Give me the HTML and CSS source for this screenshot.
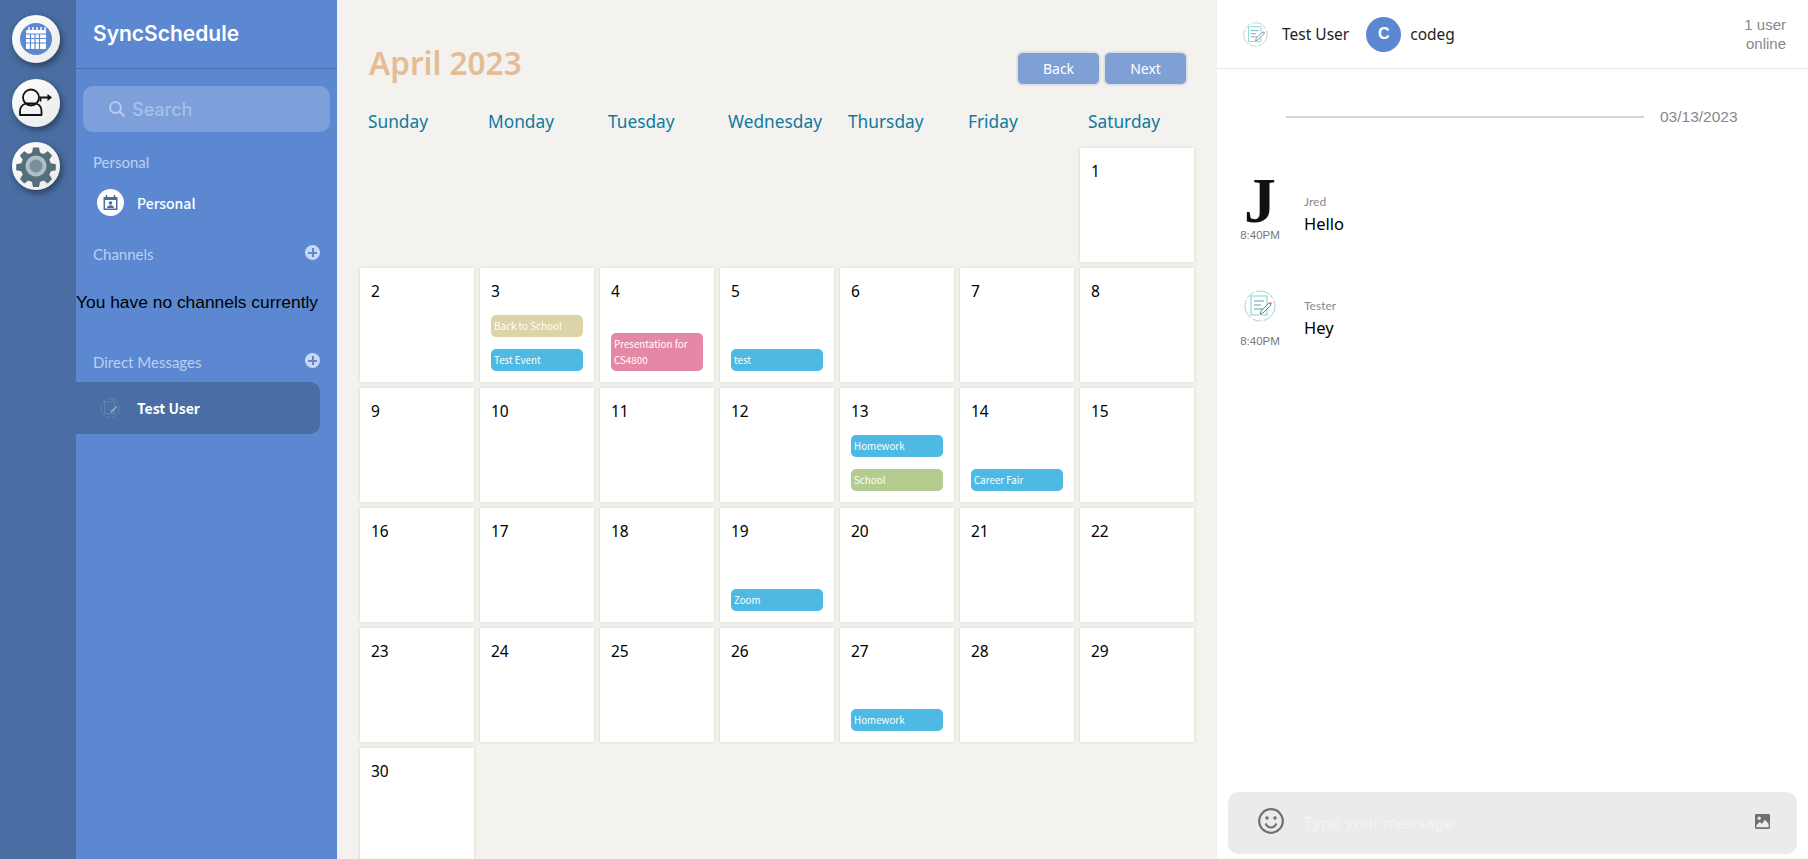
FILE: index.html
```html
<!DOCTYPE html>
<html lang="en">
	<head>
		<meta name="viewport" content="width=device-width, initial-scale=1" />
		<title>SyncSchedule</title>
		<link rel="stylesheet" href="styles.css">
	</head>
	<body>
		<svg class="defs" width="0" height="0">
			<symbol id="noteIcon" viewBox="0 0 32 32">
				<circle cx="16" cy="16" r="15" fill="none" stroke="#9fc9cf" stroke-width="0.9" stroke-dasharray="20 2 9 2" />
				<path d="M7 6h16v19H7z" fill="none" stroke="#7fd3dc" stroke-width="1.1" />
				<path d="M10 11h10M10 15h7M10 19h9" stroke="#5f9aa6" stroke-width="1" />
				<path d="M17 21l8-8 2 2-8 8-3 1z" fill="#fff" stroke="#5f8a96" stroke-width="1" />
				<path d="M25 13l1.400-1.400 2 2L27 15z" fill="#ee8f7d" />
			</symbol>
		</svg>
		<nav class="rail">
			<a class="rail-btn">
				<svg width="48" height="48" viewBox="0 0 48 48">
					<circle cx="24" cy="24" r="16" fill="#5b88d1" />
					<path d="M15 15h18a1 1 0 0 1 1 1v17a1 1 0 0 1-1 1H15a1 1 0 0 1-1-1V16a1 1 0 0 1 1-1z" fill="#fff" />
					<path d="M17 12v5M21 12v5M25 12v5M29 12v5M33 12v5" stroke="#fff" stroke-width="1.500" />
					<path d="M14 19h20M14 23.500h20M14 28h20M18.500 19v15M23 19v15M27.500 19v15" stroke="#5b88d1" stroke-width="1.200" />
				</svg>
			</a>
			<a class="rail-btn">
				<svg width="48" height="48" viewBox="0 0 48 48">
					<circle cx="19" cy="18.500" r="8" fill="none" stroke="#111" stroke-width="1.800" />
					<path d="M8 36v-4c0-4 3-6.500 6-7.500h10c3 1 5.500 3.500 5.500 7.500v4z" fill="none" stroke="#111" stroke-width="1.800" stroke-linejoin="round" />
					<path d="M28.500 22.500v-4h8.500" fill="none" stroke="#111" stroke-width="1.800" />
					<path d="M35.500 15l4.500 3.500-4.500 3.500z" fill="#111" />
				</svg>
			</a>
			<a class="rail-btn">
				<svg width="48" height="48" viewBox="0 0 48 48">
					<path d="M21 5.500h6l1 5 3.500 1.500 4.300-2.800 4.300 4.300-2.800 4.300 1.500 3.500 5 1v6l-5 1-1.500 3.500 2.800 4.300-4.300 4.300-4.300-2.800-3.500 1.500-1 5h-6l-1-5-3.500-1.500-4.300 2.800-4.300-4.300 2.800-4.300-1.500-3.500-5-1v-6l5-1 1.500-3.500-2.800-4.300 4.300-4.300 4.300 2.800 3.500-1.500z" fill="#546e7a" />
					<circle cx="24" cy="24" r="10.500" fill="#b0bec5" />
					<circle cx="24" cy="24" r="6.500" fill="#78909c" />
				</svg>
			</a>
		</nav>
		<aside class="sidebar">
			<header class="brand">SyncSchedule</header>
			<div class="search">
				<svg width="18" height="18" viewBox="0 0 18 18">
					<circle cx="7.500" cy="7.500" r="5.500" fill="none" stroke="#b5caec" stroke-width="2" />
					<path d="M11.500 11.500l5 5" stroke="#b5caec" stroke-width="2" />
				</svg>
				<span>Search</span>
			</div>
			<div class="side-head side-head-personal"><span>Personal</span></div>
			<div class="side-item side-item-personal">
				<span class="personal-badge">
					<svg width="17" height="17" viewBox="0 0 17 17">
						<path d="M1.500 3h14v13h-14z" fill="#4a6ea3" />
						<path d="M4.500 1v3M12.500 1v3" stroke="#4a6ea3" stroke-width="1.500" />
						<path d="M3 6h11v8.500H3z" fill="#fff" />
						<circle cx="8.500" cy="9" r="1.800" fill="#4a6ea3" />
						<path d="M5 14c0-2 1.500-2.800 3.500-2.800s3.500.8 3.500 2.800z" fill="#4a6ea3" />
					</svg>
				</span>
				<span>Personal</span>
			</div>
			<div class="side-head side-head-channels">
				<span>Channels</span>
				<span class="plus"></span>
			</div>
			<p class="no-channels">You have no channels currently</p>
			<div class="side-head side-head-direct">
				<span>Direct Messages</span>
				<span class="plus"></span>
			</div>
			<div class="side-item active">
				<svg class="active-note" width="20" height="20"><use href="#noteIcon" /></svg>
				<span>Test User</span>
			</div>
		</aside>
		<main class="calendar">
			<div class="cal-top">
				<h1>April 2023</h1>
				<div class="cal-btns">
					<button>Back</button>
					<button>Next</button>
				</div>
			</div>
			<div class="weekdays">
				<span>Sunday</span>
				<span>Monday</span>
				<span>Tuesday</span>
				<span>Wednesday</span>
				<span>Thursday</span>
				<span>Friday</span>
				<span>Saturday</span>
			</div>
			<div class="month">
				<div class="day first"><span class="num">1</span></div>
				<div class="day"><span class="num">2</span></div>
				<div class="day"><span class="num">3</span><div class="events"><div class="event tan">Back to School</div><div class="event blue">Test Event</div></div></div>
				<div class="day"><span class="num">4</span><div class="events"><div class="event pink">Presentation for CS4800</div></div></div>
				<div class="day"><span class="num">5</span><div class="events"><div class="event blue">test</div></div></div>
				<div class="day"><span class="num">6</span></div>
				<div class="day"><span class="num">7</span></div>
				<div class="day"><span class="num">8</span></div>
				<div class="day"><span class="num">9</span></div>
				<div class="day"><span class="num">10</span></div>
				<div class="day"><span class="num">11</span></div>
				<div class="day"><span class="num">12</span></div>
				<div class="day"><span class="num">13</span><div class="events"><div class="event blue">Homework</div><div class="event green">School</div></div></div>
				<div class="day"><span class="num">14</span><div class="events"><div class="event blue">Career Fair</div></div></div>
				<div class="day"><span class="num">15</span></div>
				<div class="day"><span class="num">16</span></div>
				<div class="day"><span class="num">17</span></div>
				<div class="day"><span class="num">18</span></div>
				<div class="day"><span class="num">19</span><div class="events"><div class="event blue">Zoom</div></div></div>
				<div class="day"><span class="num">20</span></div>
				<div class="day"><span class="num">21</span></div>
				<div class="day"><span class="num">22</span></div>
				<div class="day"><span class="num">23</span></div>
				<div class="day"><span class="num">24</span></div>
				<div class="day"><span class="num">25</span></div>
				<div class="day"><span class="num">26</span></div>
				<div class="day"><span class="num">27</span><div class="events"><div class="event blue">Homework</div></div></div>
				<div class="day"><span class="num">28</span></div>
				<div class="day"><span class="num">29</span></div>
				<div class="day"><span class="num">30</span></div>
			</div>
		</main>
		<section class="chat">
			<header class="chat-head">
				<svg class="head-note" width="25" height="25"><use href="#noteIcon" /></svg>
				<span class="head-name">Test User</span>
				<span class="letter-avatar">C</span>
				<span class="head-name">codeg</span>
				<span class="online">1 user<br />online</span>
			</header>
			<div class="date-row">
				<span class="date-line"></span>
				<span>03/13/2023</span>
			</div>
			<div class="msg msg-jred">
				<div class="msg-side">
					<span class="big-j">J</span>
					<span class="msg-time">8:40PM</span>
				</div>
				<div class="msg-body">
					<div class="msg-name">Jred</div>
					<div class="msg-text">Hello</div>
				</div>
			</div>
			<div class="msg msg-tester">
				<div class="msg-side">
					<svg class="msg-note" width="32" height="32"><use href="#noteIcon" /></svg>
					<span class="msg-time">8:40PM</span>
				</div>
				<div class="msg-body">
					<div class="msg-name">Tester</div>
					<div class="msg-text">Hey</div>
				</div>
			</div>
			<div class="composer">
				<svg class="smile" width="28" height="28" viewBox="0 0 28 28">
					<circle cx="14" cy="14" r="11.800" fill="none" stroke="#6f6f6f" stroke-width="2.200" />
					<circle cx="10" cy="11" r="1.700" fill="#6f6f6f" />
					<circle cx="18" cy="11" r="1.700" fill="#6f6f6f" />
					<path d="M8.500 16.500c1.500 3 3.500 4 5.500 4s4-1 5.500-4" fill="none" stroke="#6f6f6f" stroke-width="2" />
				</svg>
				<span class="placeholder">Type your message</span>
				<svg class="image-icon" width="15" height="15" viewBox="0 0 16 16">
					<rect width="16" height="16" rx="1.500" fill="#6f6f6f" />
					<circle cx="4.500" cy="4.500" r="1.800" fill="#ebebeb" />
					<path d="M1.500 14v-2l3.500-3.500 2.500 2 3-4.500 4 4.500V14z" fill="#ebebeb" />
				</svg>
			</div>
		</section>
	</body>
</html>
```

FILE: styles.css
```css
* {
	box-sizing: border-box;
}
html,
body {
	height: 859px;
	margin: 0;
	overflow: hidden;
}
body {
	display: flex;
	background-color: #f4f2ee;
	font-family: "Noto Sans", sans-serif;
}
.defs {
	display: none;
}
.rail {
	width: 76px;
	flex: none;
	background-color: #4a6ea3;
	padding-top: 15px;
	padding-left: 12px;
}
.rail-btn {
	display: block;
	width: 48px;
	height: 48px;
	margin-bottom: 15.500px;
	border-radius: 50%;
	background: linear-gradient(135deg, #ffffff, #e9e9e9);
	box-shadow: 2px 3px 7px rgba(0, 0, 0, 0.45);
}
.sidebar {
	width: 261px;
	flex: none;
	background-color: #5b88d1;
	color: #fff;
	display: flex;
	flex-direction: column;
}
.brand {
	height: 69px;
	padding: 20px 0 0 17px;
	border-bottom: 1px solid #4a6ea3;
	font-family: Inter, sans-serif;
	font-size: 21px;
	font-weight: 600;
	line-height: 28px;
}
.search {
	display: flex;
	align-items: center;
	gap: 6px;
	width: 247px;
	height: 46px;
	margin: 17px 0 0 7px;
	padding-left: 25px;
	border-radius: 10px;
	background-color: #7da0da;
	color: #a6bfe8;
	font-family: Inter, sans-serif;
	font-size: 18px;
	font-weight: 500;
}
.side-head {
	display: flex;
	justify-content: space-between;
	align-items: center;
	width: 244px;
	padding-left: 17px;
	color: #bdd0ee;
	font-family: Lato, sans-serif;
	font-size: 15px;
	height: 20px;
}
.side-head-personal {
	margin-top: 20px;
}
.side-head-channels {
	margin-top: 28px;
}
.side-head-direct {
	margin-top: 38px;
}
.plus {
	position: relative;
	width: 15px;
	height: 15px;
	margin-top: -3px;
	border-radius: 50%;
	background-color: #c8d8f2;
}
.plus:before,
.plus:after {
	content: "";
	position: absolute;
	background-color: #5b88d1;
}
.plus:before {
	left: 3px;
	right: 3px;
	top: 6.500px;
	height: 2px;
}
.plus:after {
	top: 3px;
	bottom: 3px;
	left: 6.500px;
	width: 2px;
}
.side-item {
	display: flex;
	align-items: center;
	width: 244px;
	font-family: "Noto Sans CJK JP", "Noto Sans", sans-serif;
	font-size: 14px;
	font-weight: 500;
}
.side-item-personal {
	margin-top: 17px;
}
.personal-badge {
	display: flex;
	align-items: center;
	justify-content: center;
	width: 27px;
	height: 27px;
	margin: 0 13px 0 21px;
	border-radius: 50%;
	background-color: #fff;
}
.side-item.active {
	height: 52px;
	margin-top: 10px;
	border-radius: 0 10px 10px 0;
	background-color: #4a6ea3;
	font-weight: 700;
}
.active-note {
	margin: 0 17px 0 24px;
	opacity: 0.45;
}
.no-channels {
	margin: 26px 0 0;
	font-family: "Liberation Sans", sans-serif;
	font-size: 17.400px;
	line-height: 24px;
	color: #000;
	white-space: nowrap;
}
.side-item span {
	line-height: 20px;
}
.calendar {
	width: 880px;
	flex: none;
	padding-left: 20px;
}
.cal-top {
	display: flex;
	justify-content: space-between;
	width: 830px;
	height: 96px;
	padding: 44px 0 0 12px;
}
.cal-top h1 {
	margin: -1px 0 0;
	font-size: 31.500px;
	font-weight: 600;
	line-height: 40px;
	color: #e5bd95;
}
.cal-btns {
	display: flex;
	gap: 4px;
	padding-top: 8px;
}
.cal-btns button {
	width: 83px;
	height: 33px;
	border: 1px solid #d8dde6;
	border-radius: 6px;
	background-color: #7fa0d5;
	box-shadow: 0 0 2px rgba(0, 0, 0, 0.2);
	color: #fff;
	font-family: "Noto Sans", sans-serif;
	font-size: 14px;
	padding: 0;
}
.weekdays {
	display: grid;
	grid-template-columns: repeat(7, 120px);
	height: 49px;
	padding-top: 13px;
	color: #0e7a9e;
	font-size: 17.300px;
	line-height: 26px;
}
.weekdays span {
	padding-left: 11px;
}
.month {
	display: grid;
	grid-template-columns: repeat(7, 120px);
	grid-auto-rows: 120px;
}
.day {
	display: flex;
	flex-direction: column;
	margin: 3px;
	box-shadow: 0 0 3px #d2d1c4;
	background-color: #fff;
	padding: 11px;
	color: #000;
}
.day.first {
	grid-column: 7;
}
.num {
	font-size: 15.500px;
	line-height: 24px;
}
.events {
	display: flex;
	flex-direction: column;
	gap: 12px;
	margin-top: auto;
}
.event {
	border-radius: 5px;
	padding: 3px;
	color: #fff;
	font-family: "Noto Sans CJK JP", "Noto Sans", sans-serif;
	font-size: 9.800px;
	line-height: 16px;
}
.tan {
	background-color: #dcd3a6;
}
.blue {
	background-color: #4eb9e2;
}
.pink {
	background-color: #e588a6;
}
.green {
	background-color: #b5cc90;
}
.chat {
	position: relative;
	width: 591px;
	flex: none;
	background-color: #fff;
	color: #000;
}
.chat-head {
	display: flex;
	align-items: center;
	height: 69px;
	border-bottom: 1px solid #e6e6e6;
	padding: 0 22px 0 26px;
	font-size: 15.500px;
}
.head-note {
	margin-right: 14px;
}
.head-name {
	color: #222;
}
.letter-avatar {
	display: flex;
	align-items: center;
	justify-content: center;
	width: 35px;
	height: 35px;
	margin: 0 9px 0 17px;
	border-radius: 50%;
	background-color: #5b88d1;
	color: #fff;
	font-family: "Liberation Sans", sans-serif;
	font-size: 16px;
	font-weight: 700;
}
.online {
	margin-left: auto;
	text-align: right;
	color: #888;
	font-family: "Liberation Sans", sans-serif;
	font-size: 15px;
	line-height: 19px;
}
.date-row {
	display: flex;
	align-items: center;
	gap: 16px;
	height: 24px;
	margin: 36px 0 0 69px;
	color: #888;
	font-family: "Liberation Sans", sans-serif;
	font-size: 15.500px;
}
.date-line {
	width: 358px;
	height: 2px;
	background-color: #d4d4d4;
}
.msg {
	display: flex;
}
.msg-jred {
	margin-top: 49px;
}
.msg-tester {
	margin-top: 47px;
}
.msg-side {
	display: flex;
	flex-direction: column;
	align-items: center;
	width: 86px;
}
.big-j {
	height: 46px;
	font-family: "Liberation Serif", serif;
	font-size: 64px;
	font-weight: 700;
	line-height: 46px;
	color: #111;
}
.msg-note {
	height: 32px;
	margin-bottom: 8px;
}
.msg-time {
	font-family: "Liberation Sans", sans-serif;
	font-size: 11.500px;
	line-height: 16px;
	color: #777;
	margin-top: 3px;
}
.msg-body {
	padding: 14px 0 0 1px;
}
.msg-tester .msg-body {
	padding-top: 6px;
}
.msg-name {
	font-family: Lato, sans-serif;
	font-size: 12px;
	line-height: 19px;
	color: #888;
}
.msg-text {
	font-size: 16.500px;
	line-height: 26px;
	color: #000;
}
.composer {
	position: absolute;
	left: 11px;
	right: 11px;
	top: 792px;
	height: 62px;
	display: flex;
	align-items: center;
	padding: 0 27px 0 29px;
	border-radius: 10px;
	background-color: #ebebeb;
}
.smile {
	margin-bottom: 4px;
}
.placeholder {
	margin-left: 18px;
	color: #f3f3f3;
	font-family: "Liberation Sans", sans-serif;
	font-size: 17.300px;
	padding-top: 1px;
}
.image-icon {
	margin-left: auto;
	margin-bottom: 3px;
}
```
